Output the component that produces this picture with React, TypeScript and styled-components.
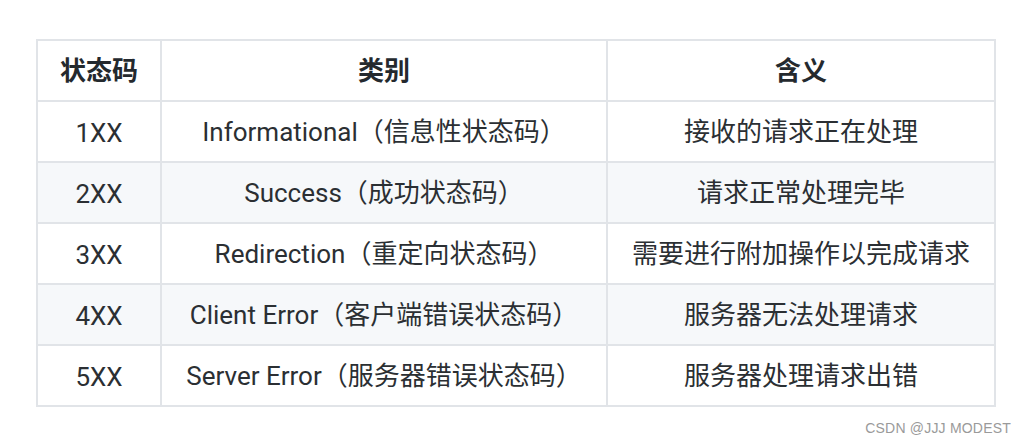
import styled, { createGlobalStyle } from "styled-components";

const GlobalStyle = createGlobalStyle`
  html, body {
    margin: 0;
    padding: 0;
    background: #ffffff;
  }
  body {
    font-family: Roboto, "Noto Sans CJK SC", sans-serif;
    color: #24292e;
  }
`;

const Page = styled.div`
  width: 1027px;
  height: 444px;
  display: flex;
  flex-direction: column;
  padding: 39px 0 0 36px;
  box-sizing: border-box;
  position: relative;
`;

const Table = styled.table`
  border-collapse: collapse;
  table-layout: fixed;
  width: 960px;
`;

const HeadCell = styled.th<{ $w: number }>`
  width: ${(p) => p.$w}px;
  height: 61px;
  box-sizing: border-box;
  border: 2px solid #e1e4e8;
  font-size: 26px;
  line-height: 1;
  font-weight: 700;
  color: #24292e;
  text-align: center;
  vertical-align: middle;
  padding: 0;
  background: #ffffff;
`;

const Row = styled.tr<{ $striped: boolean }>`
  background: ${(p) => (p.$striped ? "#f6f8fa" : "#ffffff")};
`;

const Cell = styled.td<{ $latin?: boolean }>`
  height: 61px;
  box-sizing: border-box;
  border: 2px solid #e1e4e8;
  font-size: 26px;
  line-height: 1;
  color: #2b2f33;
  text-align: center;
  vertical-align: middle;
  padding: ${(p) => (p.$latin ? "3px 0 0" : "0")};
  white-space: nowrap;
`;

const Watermark = styled.div`
  position: absolute;
  right: 16px;
  bottom: 8px;
  font-family: "Liberation Sans", sans-serif;
  font-size: 14px;
  color: #9a9a9a;
  letter-spacing: 0.2px;
`;

const rows = [
  ["1XX", "Informational（信息性状态码）", "接收的请求正在处理"],
  ["2XX", "Success（成功状态码）", "请求正常处理完毕"],
  ["3XX", "Redirection（重定向状态码）", "需要进行附加操作以完成请求"],
  ["4XX", "Client Error（客户端错误状态码）", "服务器无法处理请求"],
  ["5XX", "Server Error（服务器错误状态码）", "服务器处理请求出错"],
];

export default function App() {
  return (
    <>
      <GlobalStyle />
      <Page>
        <Table>
          <thead>
            <tr>
              <HeadCell $w={124}>状态码</HeadCell>
              <HeadCell $w={446}>类别</HeadCell>
              <HeadCell $w={388}>含义</HeadCell>
            </tr>
          </thead>
          <tbody>
            {rows.map((r, i) => (
              <Row key={r[0]} $striped={i % 2 === 1}>
                <Cell $latin>{r[0]}</Cell>
                <Cell>{r[1]}</Cell>
                <Cell>{r[2]}</Cell>
              </Row>
            ))}
          </tbody>
        </Table>
        <Watermark>CSDN @JJJ MODEST</Watermark>
      </Page>
    </>
  );
}
